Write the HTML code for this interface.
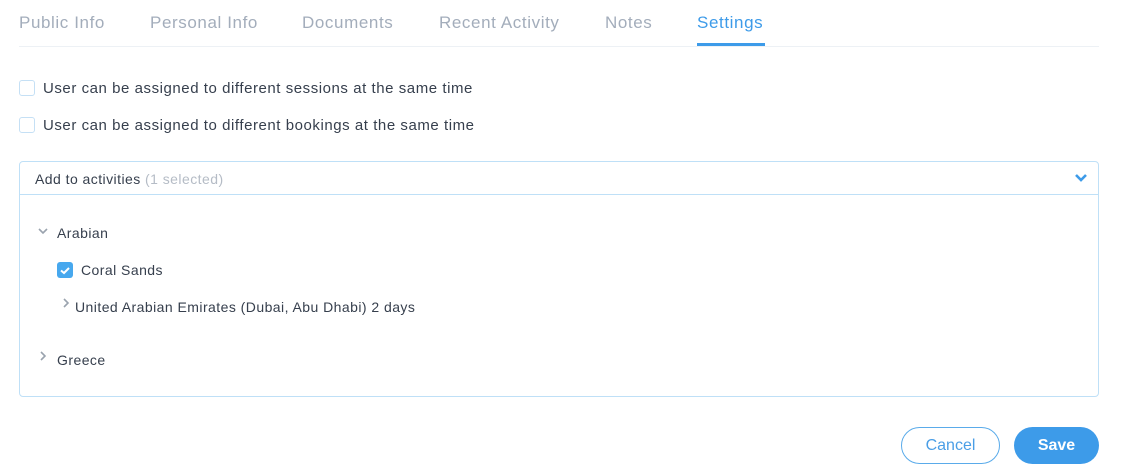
<!DOCTYPE html>
<html><head><style>
*{box-sizing:border-box;margin:0;padding:0}
body{width:1121px;height:471px;background:#fff;font-family:"Liberation Sans",sans-serif;position:relative;overflow:hidden;color:#363f4d}
.a{position:absolute;white-space:nowrap}
.tab{font-size:17px;color:#a3adbb;top:13px;letter-spacing:0.6px}
.cb{position:absolute;width:16px;height:16px;border:1px solid #c5e0f5;border-radius:3px;background:#fff}
.t{font-size:15px;letter-spacing:0.55px}
.s{font-size:14px;letter-spacing:0.45px}
</style></head><body>
<div class="a tab" style="left:19px">Public Info</div>
<div class="a tab" style="left:150px">Personal Info</div>
<div class="a tab" style="left:302px">Documents</div>
<div class="a tab" style="left:439px">Recent Activity</div>
<div class="a tab" style="left:605px">Notes</div>
<div class="a tab" style="left:697px;color:#3d9be9">Settings</div>
<div class="a" style="left:19px;top:46px;width:1080px;height:1px;background:#edf1f5"></div>
<div class="a" style="left:697px;top:43px;width:68px;height:3px;background:#3d9be9"></div>

<div class="cb" style="left:19px;top:80px"></div>
<div class="a t" style="left:43px;top:80px">User can be assigned to different sessions at the same time</div>
<div class="cb" style="left:19px;top:117px"></div>
<div class="a t" style="left:43px;top:117px">User can be assigned to different bookings at the same time</div>

<div class="a" style="left:19px;top:161px;width:1080px;height:236px;border:1px solid #bfe0f7;border-radius:4px"></div>
<div class="a" style="left:20px;top:194px;width:1078px;height:1px;background:#bfe0f7"></div>
<div class="a s" style="left:35px;top:171px">Add to activities <span style="color:#b5bcc6">(1 selected)</span></div>
<svg class="a" style="left:1074px;top:173px" width="14" height="10"><path d="M2 2l5 5 5-5" stroke="#3d9be9" stroke-width="2.6" fill="none"/></svg>

<svg class="a" style="left:38px;top:227px" width="10" height="8"><path d="M1 2l4 4 4-4" stroke="#9aa3ae" stroke-width="1.6" fill="none"/></svg>
<div class="a s" style="left:57px;top:225px">Arabian</div>
<div class="a" style="left:57px;top:262px;width:16px;height:16px;background:#47a8ee;border-radius:3px"></div>
<svg class="a" style="left:57px;top:262px" width="16" height="16"><path d="M4 8.5l3 2.5 5-5" stroke="#fff" stroke-width="2" fill="none"/></svg>
<div class="a s" style="left:81px;top:262px">Coral Sands</div>
<svg class="a" style="left:62px;top:298px" width="8" height="10"><path d="M2 1l4 4-4 4" stroke="#9aa3ae" stroke-width="1.6" fill="none"/></svg>
<div class="a s" style="left:75px;top:299px">United Arabian Emirates (Dubai, Abu Dhabi) 2 days</div>
<svg class="a" style="left:39px;top:351px" width="8" height="10"><path d="M2 1l4 4-4 4" stroke="#9aa3ae" stroke-width="1.6" fill="none"/></svg>
<div class="a s" style="left:57px;top:352px">Greece</div>

<div class="a" style="left:901px;top:427px;width:99px;height:37px;border:1px solid #5aabea;border-radius:19px;color:#4a9ee6;font-size:16px;text-align:center;line-height:35px">Cancel</div>
<div class="a" style="left:1014px;top:427px;width:85px;height:37px;background:#3d9be9;border-radius:19px;color:#fff;font-size:16px;font-weight:bold;text-align:center;line-height:37px">Save</div>
</body></html>
